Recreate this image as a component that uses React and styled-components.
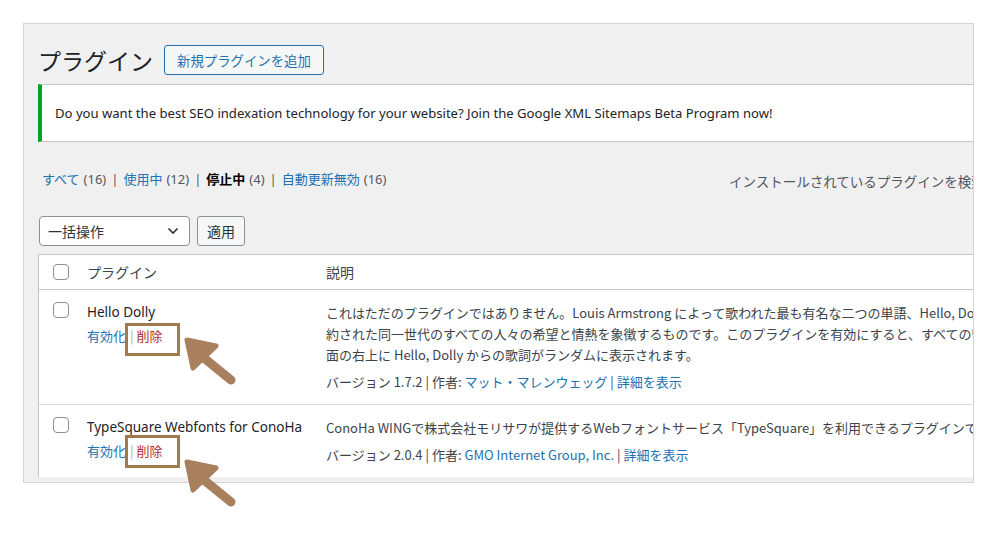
import React from "react";
import styled, { createGlobalStyle } from "styled-components";

const GlobalStyle = createGlobalStyle`
    body {
        margin: 0;
        background: #fff;
        font-family: "Noto Sans", "Noto Sans CJK JP", sans-serif;
        color: #3c434a;
    }
`;

const plugins = [
    {
        name: "Hello Dolly",
        lines: [
            "これはただのプラグインではありません。Louis Armstrong によって歌われた最も有名な二つの単語、Hello, Dolly に要",
            "約された同一世代のすべての人々の希望と情熱を象徴するものです。このプラグインを有効にすると、すべての管理画",
            "面の右上に Hello, Dolly からの歌詞がランダムに表示されます。",
        ],
        version: "1.7.2",
        author: "マット・マレンウェッグ",
        boxTop: -2,
        arrowTop: -2,
    },
    {
        name: "TypeSquare Webfonts for ConoHa",
        lines: [
            "ConoHa WINGで株式会社モリサワが提供するWebフォントサービス「TypeSquare」を利用できるプラグインです。",
        ],
        version: "2.0.4",
        author: "GMO Internet Group, Inc.",
        boxTop: -5,
        arrowTop: 5,
    },
];

const filters = [
    { label: "すべて", count: 16 },
    { label: "使用中", count: 12 },
    { label: "停止中", count: 4, current: true },
    { label: "自動更新無効", count: 16 },
];

const App = () => {
    return (
        <>
            <GlobalStyle />
            <Page>
                <Frame>
                    <TitleRow>
                        <Title>プラグイン</Title>
                        <AddButton>新規プラグインを追加</AddButton>
                    </TitleRow>

                    <Notice>
                        Do you want the best SEO indexation technology for your website? Join the Google XML
                        Sitemaps Beta Program now!
                    </Notice>

                    <FilterRow>
                        <Filters>
                            {filters.map((f, i) => (
                                <li key={f.label}>
                                    {i > 0 && <Sep>|</Sep>}
                                    <FilterLink $current={f.current}>{f.label}</FilterLink>
                                    <Count>({f.count})</Count>
                                </li>
                            ))}
                        </Filters>
                        <SearchLabel>インストールされているプラグインを検索</SearchLabel>
                    </FilterRow>

                    <BulkRow>
                        <BulkSelect>
                            一括操作
                            <svg width="12" height="8" viewBox="0 0 12 8">
                                <polyline points="1.5,1.5 6,6 10.5,1.5" fill="none" stroke="#2c3338" strokeWidth="1.6" />
                            </svg>
                        </BulkSelect>
                        <ApplyButton>適用</ApplyButton>
                    </BulkRow>

                    <Table>
                        <HeadRow>
                            <CheckCell $head>
                                <Check />
                            </CheckCell>
                            <HeadCell>プラグイン</HeadCell>
                            <HeadCell>説明</HeadCell>
                        </HeadRow>
                        {plugins.map((p) => (
                            <Row key={p.name}>
                                <CheckCell>
                                    <Check />
                                </CheckCell>
                                <NameCell>
                                    <PluginName>{p.name}</PluginName>
                                    <Actions>
                                        <ActionLink>有効化</ActionLink>
                                        <Sep $small>|</Sep>
                                        <ActionLink $delete>削除</ActionLink>
                                        <Highlight style={{ top: p.boxTop }} />
                                        <Arrow style={{ top: p.arrowTop }} width="120" height="70" viewBox="0 0 120 70">
                                            <polygon
                                                points="62,17 91,23 68,45"
                                                fill="#a8805e"
                                                stroke="#a8805e"
                                                strokeWidth="5"
                                                strokeLinejoin="round"
                                            />
                                            <line x1="74" y1="31" x2="106" y2="57" stroke="#a8805e" strokeWidth="9" strokeLinecap="round" />
                                        </Arrow>
                                    </Actions>
                                </NameCell>
                                <DescCell>
                                    <Desc>
                                        {p.lines.map((l, i) => (
                                            <span key={i}>
                                                {l}
                                                {i < p.lines.length - 1 && <br />}
                                            </span>
                                        ))}
                                    </Desc>
                                    <Meta>
                                        バージョン {p.version} <Sep $meta>|</Sep> 作者: <MetaLink>{p.author}</MetaLink>{" "}
                                        <Sep $meta>|</Sep> <MetaLink>詳細を表示</MetaLink>
                                    </Meta>
                                </DescCell>
                            </Row>
                        ))}
                    </Table>
                </Frame>
            </Page>
        </>
    );
};

const Page = styled.div`
    min-height: 536px;
    box-sizing: border-box;
    padding: 23px 0 0 23px;
`;

/* the screenshot of the admin page is cut at the right: each wide part clips itself */
const Frame = styled.div`
    width: 935px;
    height: 437px;
    border: 1px solid #d4d4d4;
    background: #f0f0f1;
    padding: 21px 0 0 14px;
    box-sizing: content-box;
`;

const TitleRow = styled.div`
    display: flex;
    align-items: center;
    gap: 11px;
    height: 30px;
`;

const Title = styled.h1`
    margin: 0;
    font-size: 23px;
    font-weight: 400;
    color: #1d2327;
    line-height: 30px;
    font-family: "Noto Sans CJK JP", sans-serif;
`;

const AddButton = styled.button`
    height: 30px;
    padding: 0 12px;
    border: 1px solid #2271b1;
    border-radius: 3px;
    background: #f6f7f7;
    color: #2271b1;
    font-size: 13.4px;
    font-family: "Noto Sans CJK JP", sans-serif;
    line-height: 28px;
`;

const Notice = styled.div`
    margin-top: 9px;
    background: #fff;
    border: 1px solid #c3c4c7;
    border-left: 4px solid #00a32a;
    border-right: none;
    padding: 19px 0 18px 13px;
    font-size: 13.1px;
    line-height: 19px;
    color: #1d2327;
    white-space: nowrap;
    overflow: hidden;
`;

const FilterRow = styled.div`
    display: grid;
    grid-template-columns: 691px auto;
    margin-top: 24px;
    overflow: hidden;
`;

const Filters = styled.ul`
    display: flex;
    margin: 0;
    padding: 0 0 0 4px;
    list-style: none;
    font-size: 13px;
    line-height: 20px;
    li {
        display: flex;
        align-items: center;
    }
`;

const FilterLink = styled.a`
    color: ${(p) => (p.$current ? "#000" : "#2271b1")};
    font-weight: ${(p) => (p.$current ? 700 : 400)};
    font-family: "Noto Sans CJK JP", sans-serif;
    margin-right: 4px;
`;

const Count = styled.span`
    color: #50575e;
`;

const Sep = styled.span`
    color: ${(p) => (p.$small ? "#a7aaad" : p.$meta ? "#3c434a" : "#50575e")};
    margin: ${(p) => (p.$small ? "0 3px 0 4px" : p.$meta ? "0" : "0 5px")};
`;

const SearchLabel = styled.span`
    padding-top: 5px;
    font-size: 13.5px;
    line-height: 20px;
    color: #50575e;
    white-space: nowrap;
    font-family: "Noto Sans CJK JP", sans-serif;
`;

const BulkRow = styled.div`
    display: flex;
    gap: 7px;
    margin-top: 25px;
    padding-left: 1px;
`;

const BulkSelect = styled.div`
    width: 151px;
    height: 30px;
    box-sizing: border-box;
    display: flex;
    align-items: center;
    justify-content: space-between;
    padding: 0 10px 0 8px;
    background: #fff;
    border: 1px solid #8c8f94;
    border-radius: 4px;
    font-size: 14px;
    color: #2c3338;
    font-family: "Noto Sans CJK JP", sans-serif;
`;

const ApplyButton = styled.button`
    width: 48px;
    height: 30px;
    border: 1px solid #8c8f94;
    border-radius: 3px;
    background: #f6f7f7;
    color: #2c3338;
    font-size: 14px;
    font-family: "Noto Sans CJK JP", sans-serif;
    padding: 0;
`;

const Table = styled.div`
    margin-top: 8px;
    background: #fff;
    border: 1px solid #c3c4c7;
    border-right: none;
    border-bottom: none;
`;

const HeadRow = styled.div`
    display: grid;
    grid-template-columns: 38px 239px minmax(0, 1fr);
    height: 34px;
    border-bottom: 1px solid #c3c4c7;
    align-items: center;
`;

const Row = styled.div`
    display: grid;
    grid-template-columns: 38px 239px minmax(0, 1fr);
    border-bottom: 1px solid #dcdcde;
    &:last-child {
        border-bottom: none;
    }
`;

const CheckCell = styled.div`
    padding: ${(p) => (p.$head ? "0 0 0 14px" : "12px 0 0 14px")};
    display: flex;
    align-items: ${(p) => (p.$head ? "center" : "flex-start")};
`;

const Check = styled.span`
    width: 16px;
    height: 16px;
    box-sizing: border-box;
    border: 1px solid #8c8f94;
    border-radius: 4px;
    background: #fff;
`;

const HeadCell = styled.div`
    padding-left: 10px;
    font-size: 14px;
    color: #3c434a;
    font-family: "Noto Sans CJK JP", sans-serif;
`;

const NameCell = styled.div`
    padding: 12px 10px 12px;
`;

const PluginName = styled.div`
    font-size: 13.5px;
    line-height: 21px;
    color: #1d2327;
    white-space: nowrap;
`;

const Actions = styled.div`
    position: relative;
    margin-top: 2px;
    font-size: 13px;
    line-height: 21px;
    font-family: "Noto Sans CJK JP", sans-serif;
`;

const ActionLink = styled.a`
    color: ${(p) => (p.$delete ? "#b32d2e" : "#2271b1")};
`;

const Highlight = styled.span`
    position: absolute;
    left: 38px;
    width: 55px;
    height: 33px;
    box-sizing: border-box;
    border: 3px solid #a07a4e;
`;

const Arrow = styled.svg`
    position: absolute;
    left: 38px;
    overflow: visible;
`;

const DescCell = styled.div`
    padding: 12px 0 12px 10px;
    font-family: "Noto Sans CJK JP", sans-serif;
    font-size: 13px;
    line-height: 21px;
    color: #3c434a;
    white-space: nowrap;
    overflow: hidden;
`;

const Desc = styled.p`
    margin: 0 0 6px;
`;

const Meta = styled.div`
    color: #3c434a;
`;

const MetaLink = styled.a`
    color: #2271b1;
`;

export default App;
